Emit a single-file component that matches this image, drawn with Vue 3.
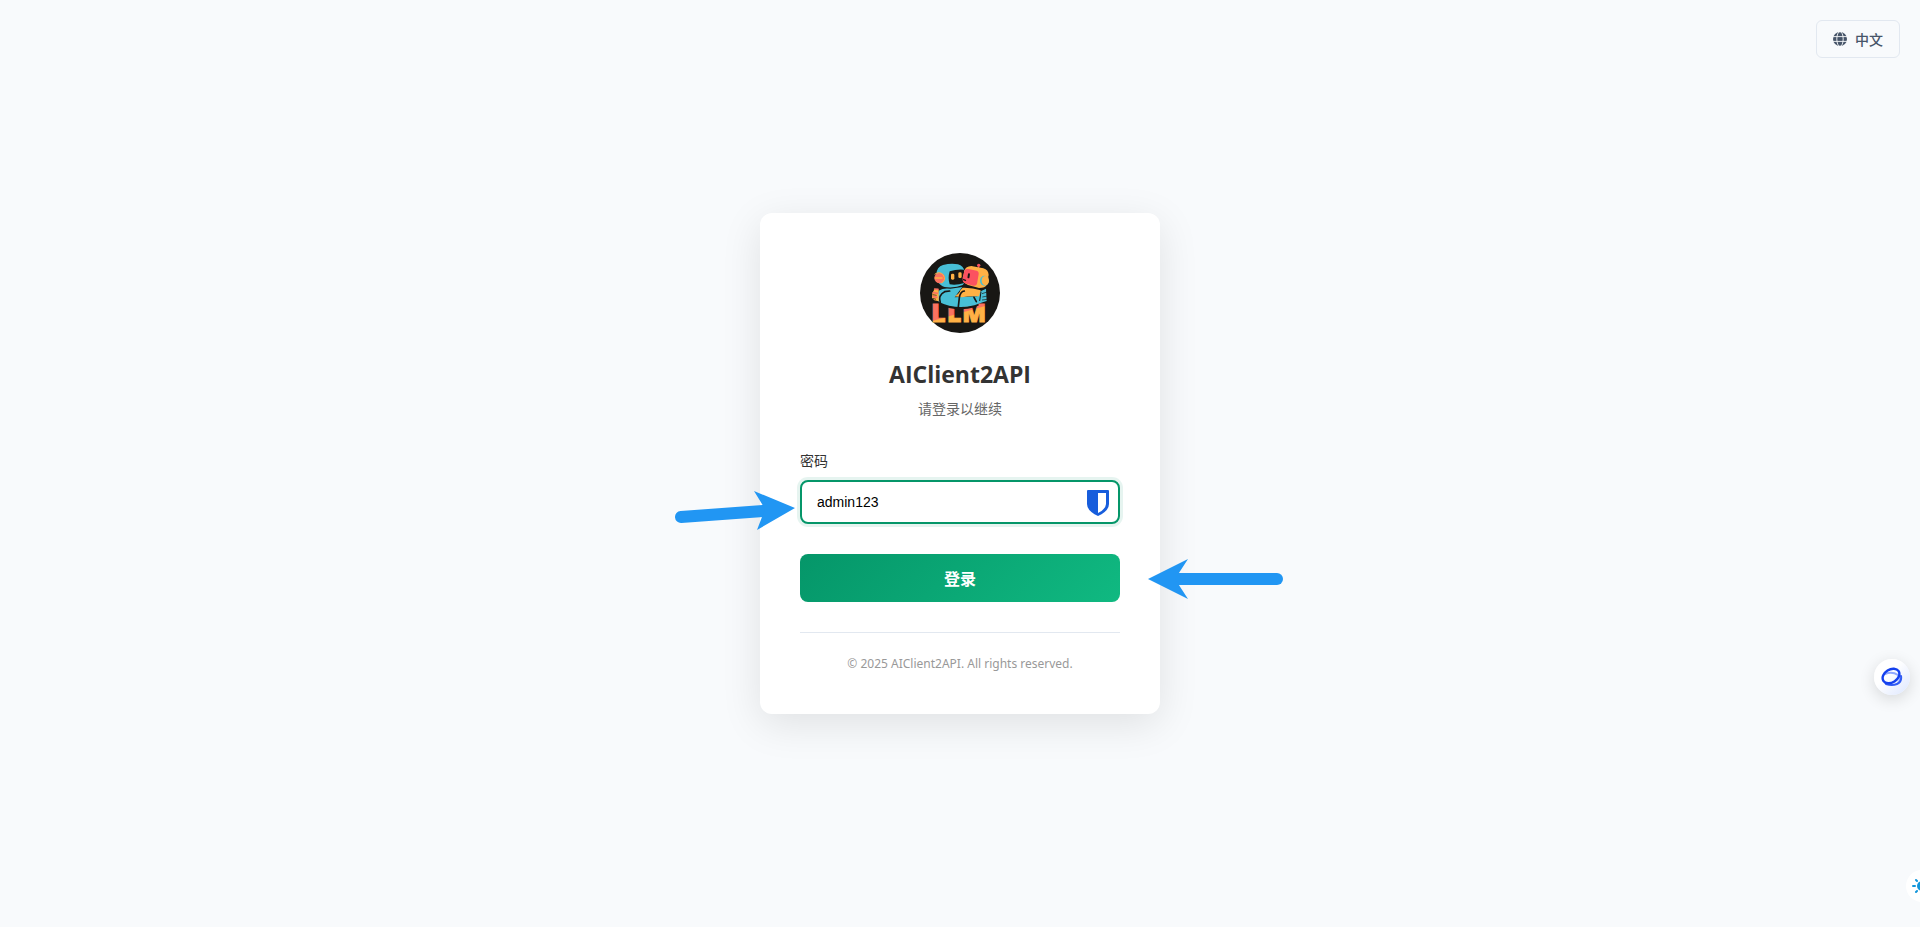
<template>
  <div class="login-page">
    <button class="lang-btn" type="button" @click="toggleLang">
      <svg class="lang-icon" viewBox="0 0 14 14" aria-hidden="true">
        <circle cx="7" cy="7" r="7" fill="#475569" />
        <g fill="none" stroke="#f8fafc" stroke-width="0.9">
          <path d="M0 4.6H14M0 9.4H14" />
          <ellipse cx="7" cy="7" rx="3.2" ry="7.4" />
        </g>
      </svg>
      <span>{{ lang === 'zh' ? '中文' : 'EN' }}</span>
    </button>

    <main class="login-card">
      <header class="login-header">
        <svg class="logo" viewBox="30 30 240 240" role="img" aria-label="AIClient2API">
          <defs>
            <linearGradient id="letters" gradientUnits="userSpaceOnUse" x1="140" y1="184" x2="155" y2="237">
              <stop offset="0.48" stop-color="#fb7260" />
              <stop offset="0.54" stop-color="#ffb145" />
            </linearGradient>
          </defs>
          <circle cx="150" cy="150" r="120" fill="#181714" />
          <text y="237" class="logo-text" fill="url(#letters)" stroke="url(#letters)"><tspan x="64">L</tspan><tspan x="111">L</tspan><tspan x="157">M</tspan></text>
          <!-- 左侧机器人 -->
          <path d="M79 94Q80 72 99 66Q124 59 144 64Q160 69 164 84Q170 115 158 126Q139 135 111 133Q81 131 79 94Z" fill="#48bfd6" />
          <path d="M119 85Q140 78 162 80L163 120Q141 127 119 124Q113 105 119 85Z" fill="#181714" />
          <rect x="123" y="92" width="10" height="18" rx="4" fill="#ffb145" />
          <rect x="145" y="88" width="10" height="17" rx="4" fill="#ffb145" />
          <circle cx="89" cy="105" r="16" fill="#fb7260" />
          <path d="M76 105H96" stroke="#ffb145" stroke-width="5" stroke-linecap="round" />
          <path d="M74 94Q89 83 100 96Q109 112 94 120" fill="none" stroke="#ffb145" stroke-width="3" />
          <!-- 右侧机器人 -->
          <path d="M206 72L204 83" stroke="#fb5260" stroke-width="4" />
          <circle cx="206" cy="67" r="5" fill="#fb5260" />
          <path d="M163 83Q167 70 184 69L220 76Q235 80 236 96L230 126Q226 135 207 135L174 126Q156 119 159 103Z" fill="#ffb145" />
          <path d="M164 81Q169 77 179 79L200 83Q207 85 206 94L201 122Q199 130 189 128L165 121Q156 116 158 104Z" fill="#fb5260" />
          <rect x="173" y="91" width="6" height="15" rx="3" fill="#181714" transform="rotate(9 176 99)" />
          <path d="M159 109L168 113" stroke="#181714" stroke-width="4" />
          <ellipse cx="223" cy="113" rx="13" ry="15" fill="#48bfd6" />
          <ellipse cx="226" cy="113" rx="11" ry="14" fill="#ffb145" />
          <!-- 拥抱的手臂 -->
          <path d="M92 178Q100 187 118 191Q156 200 193 189L205 183" fill="none" stroke="#181714" stroke-width="8" />
          <path d="M86 143Q100 134 121 137L157 132L134 163L202 160L209 146L228 137L230 174Q204 182 193 187Q156 196 118 188Q85 180 80 168Z" fill="#48bfd6" />
          <path d="M158 134Q187 133 212 142L207 160Q177 158 156 163L134 160Q150 151 151 142Z" fill="#ffb145" />
          <path d="M91 179Q83 157 104 146L119 144M145 191L148 164Q151 145 163 144M192 163L199 176" fill="none" stroke="#181714" stroke-width="5" stroke-linecap="round" />
          <path d="M67 150L74 138L86 141L86 175L73 172L66 164Z" fill="#ffb145" />
          <path d="M74 138L84 139M70 149L82 151M69 160L80 163" stroke="#fb7260" stroke-width="5" stroke-linecap="round" />
          <path d="M68 155L80 157M69 166L78 169M216 152L231 147M217 162L233 159M216 171L231 169" stroke="#181714" stroke-width="2" />
          <path d="M213 146L209 174" stroke="#181714" stroke-width="3" />
        </svg>
        <h1>AIClient2API</h1>
        <p>请登录以继续</p>
      </header>

      <form @submit.prevent="handleLogin">
        <label for="password">密码</label>
        <div class="input-wrap">
          <input id="password" v-model="password" type="text" autocomplete="off" />
          <svg class="shield" viewBox="0 0 22 26" aria-hidden="true">
            <path d="M1 0H21Q22 0 22 1V14Q22 21 11 26Q0 21 0 14V1Q0 0 1 0Z" fill="#175ddc" />
            <path d="M11 3H19V14Q19 19 11 23Z" fill="#fff" />
          </svg>
        </div>
        <button class="login-btn" type="submit">登录</button>
      </form>

      <footer class="login-footer">© 2025 AIClient2API. All rights reserved.</footer>

      <!-- 操作指引箭头 -->
      <svg class="arrow arrow-input" viewBox="0 0 120 40" aria-hidden="true">
        <path d="M6 27L88 21" stroke="#2196f3" stroke-width="12" stroke-linecap="round" />
        <path d="M120 18L79 1L90 19L82 40Z" fill="#2196f3" />
      </svg>
      <svg class="arrow arrow-submit" viewBox="0 0 136 40" aria-hidden="true">
        <path d="M30 20H129" stroke="#2196f3" stroke-width="12" stroke-linecap="round" />
        <path d="M0 20L40 0L27 20L40 40Z" fill="#2196f3" />
      </svg>
    </main>

    <button class="float-btn assistant" type="button" aria-label="助手">
      <svg viewBox="0 0 22 20" aria-hidden="true">
        <g fill="none" stroke-linecap="round">
          <path d="M4 7Q11 4 17 8Q21 12 17 16" stroke="#8fa8ff" stroke-width="2" />
          <path d="M20 9Q21 15 16 17Q11 19 5 17" stroke="#315bf4" stroke-width="2" />
          <ellipse cx="10" cy="9" rx="9" ry="6.5" stroke="#1541ee" stroke-width="2.4" transform="rotate(-32 10 9)" />
        </g>
      </svg>
    </button>
    <button class="float-btn theme" type="button" aria-label="主题">
      <svg viewBox="0 0 20 20" aria-hidden="true">
        <circle cx="10" cy="10" r="5" fill="#1296db" />
        <path d="M1 10H3M17 10H19M10 1V3M10 17V19M4 4L5 5M15 15L16 16M4 16L5 15M15 5L16 4" stroke="#1296db" stroke-width="2" stroke-linecap="round" />
      </svg>
    </button>
  </div>
</template>

<script setup>
import { ref } from 'vue'

const password = ref('admin123')
const lang = ref('zh')

const toggleLang = () => {
  lang.value = lang.value === 'zh' ? 'en' : 'zh'
}

const handleLogin = () => {
  if (!password.value.trim()) return
  console.log('login')
}
</script>

<style>
body { margin: 0; background: #f8fafc; }
</style>

<style scoped>
* { box-sizing: border-box; }
.login-page { min-height: 100vh; display: flex; align-items: center; justify-content: center; position: relative; overflow: hidden; background: #f8fafc; font-family: "Open Sans", "Noto Sans CJK SC", sans-serif; font-size: 14px; line-height: 21px; }
button { font-family: inherit; cursor: pointer; }

.lang-btn { position: absolute; top: 20px; right: 20px; height: 38px; padding: 0 16px; display: flex; align-items: center; gap: 8px; background: transparent; border: 1px solid #e2e8f0; border-radius: 6px; color: #475569; font-size: 14px; font-weight: 500; }
.lang-icon { width: 14px; height: 14px; }

.login-card { position: relative; width: 400px; padding: 40px; background: #fff; border-radius: 12px; box-shadow: 0 10px 40px rgba(0, 0, 0, 0.1); }
.login-header { text-align: center; margin-bottom: 31px; }
.logo { display: block; width: 80px; height: 80px; margin: 0 auto 23px; }
.logo-text { font-family: "Noto Sans", sans-serif; font-size: 74px; font-weight: 900; stroke-width: 3px; }
h1 { margin: 0 0 6px; font-size: 23px; line-height: 36px; font-weight: 700; color: #333; }
p { margin: 0; color: #666; }

label { display: block; margin-bottom: 9px; color: #333; font-weight: 400; }
.input-wrap { position: relative; margin-bottom: 30px; }
input { display: block; width: 100%; height: 44px; padding: 0 48px 0 15px; border: 2px solid #059669; border-radius: 8px; outline: none; box-shadow: 0 0 0 3px rgba(5, 150, 105, 0.1); background: #fff; color: #000; font-family: "Liberation Sans", Arial, sans-serif; font-size: 14px; }
.shield { position: absolute; top: 10px; right: 11px; width: 22px; height: 26px; }
.login-btn { display: block; width: 100%; height: 48px; border: none; border-radius: 8px; background: linear-gradient(135deg, #059669 0%, #10b981 100%); color: #fff; font-size: 16px; font-weight: 700; }
.login-footer { margin-top: 30px; padding-top: 20px; border-top: 1px solid #e2e8f0; text-align: center; font-family: "Noto Sans", sans-serif; font-size: 12px; color: #999; }

.arrow { position: absolute; fill: none; pointer-events: none; }
.arrow-input { top: 277px; left: -85px; width: 120px; height: 40px; }
.arrow-submit { top: 346px; left: 388px; width: 136px; height: 40px; }

.float-btn { position: absolute; display: flex; align-items: center; justify-content: center; padding: 0; border: none; border-radius: 50%; background: #fff; }
.assistant { right: 10px; bottom: 232px; width: 36px; height: 36px; background: linear-gradient(135deg, #fff 40%, #dce6ff 100%); box-shadow: 0 4px 16px rgba(0, 0, 0, 0.14); }
.assistant svg { width: 22px; height: 20px; }
.theme { right: -18px; bottom: 25px; width: 32px; height: 32px; }
.theme svg { width: 20px; height: 20px; }
</style>
